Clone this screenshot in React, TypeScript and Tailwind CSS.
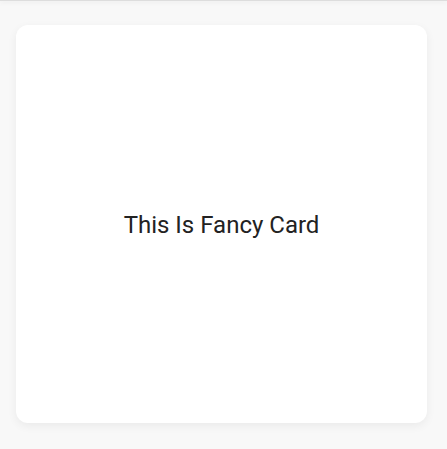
export default function App() {
  return (
    <div
      className="w-[447px] h-[449px] bg-[#f8f8f8] overflow-hidden"
      style={{ fontFamily: "Roboto, 'Noto Sans', sans-serif" }}
    >
      {/* app bar shadow from above the view */}
      <div className="h-px bg-[#dddddd] shadow-[0_1px_5px_rgba(0,0,0,0.14)]" />
      <div className="pt-[24px] pl-4">
        <div className="w-[411px] h-[398px] bg-white rounded-[12px] shadow-[0_3px_10px_rgba(0,0,0,0.06)] flex items-center justify-center pt-[2px]">
          <span className="text-[24px] text-[#222222]">This Is Fancy Card</span>
        </div>
      </div>
    </div>
  );
}
